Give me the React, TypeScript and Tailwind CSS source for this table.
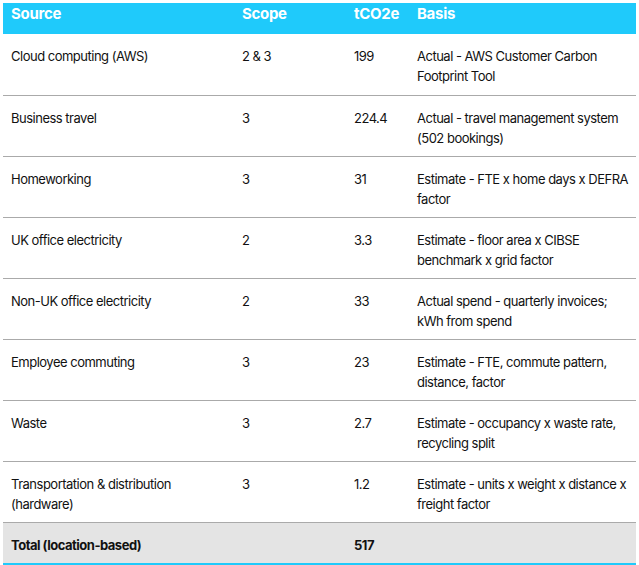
const rows = [
  ['Cloud computing (AWS)', '2 & 3', '199', 'Actual - AWS Customer Carbon Footprint Tool'],
  ['Business travel', '3', '224.4', 'Actual - travel management system (502 bookings)'],
  ['Homeworking', '3', '31', 'Estimate - FTE x home days x DEFRA factor'],
  ['UK office electricity', '2', '3.3', 'Estimate - floor area x CIBSE benchmark x grid factor'],
  ['Non-UK office electricity', '2', '33', 'Actual spend - quarterly invoices; kWh from spend'],
  ['Employee commuting', '3', '23', 'Estimate - FTE, commute pattern, distance, factor'],
  ['Waste', '3', '2.7', 'Estimate - occupancy x waste rate, recycling split'],
  ['Transportation & distribution (hardware)', '3', '1.2', 'Estimate - units x weight x distance x freight factor'],
];

export default function App() {
  return (
    <div className="bg-white p-[3px] pb-0" style={{ fontFamily: 'Inter, "Liberation Sans", sans-serif' }}>
      <table className="w-[633px] table-fixed border-collapse text-[13px] tracking-[-0.5px] text-[#111]">
        <colgroup>
          <col className="w-[231px]" />
          <col className="w-[112px]" />
          <col className="w-[63px]" />
          <col className="w-[227px]" />
        </colgroup>
        <thead>
          <tr className="bg-[#1fcafb] text-left text-[15px] font-bold tracking-[-0.3px] text-white">
            <th className="px-2 pt-0 pb-[9px] leading-[22px]">Source</th>
            <th className="px-2 pt-0 pb-[9px] leading-[22px]">Scope</th>
            <th className="px-2 pt-0 pb-[9px] leading-[22px]">tCO2e</th>
            <th className="px-2 pt-0 pb-[9px] leading-[22px]">Basis</th>
          </tr>
        </thead>
        <tbody>
          {rows.map((r, i) => (
            <tr key={i} className="h-[61px] border-b border-[#aaaaaa] align-top">
              {r.map((c, j) => (
                <td key={j} className="pl-2 pr-1 pt-[12px] pb-[8px] leading-5">
                  {c}
                </td>
              ))}
            </tr>
          ))}
          <tr className="border-b-2 border-[#1fcafb] bg-[#e4e4e4] font-bold">
            <td className="px-2 pt-[13px] pb-[9px] leading-[18px]">Total (location-based)</td>
            <td className="px-2"></td>
            <td className="px-2 pt-[13px] pb-[9px] leading-[18px]">517</td>
            <td className="px-2"></td>
          </tr>
        </tbody>
      </table>
    </div>
  );
}
